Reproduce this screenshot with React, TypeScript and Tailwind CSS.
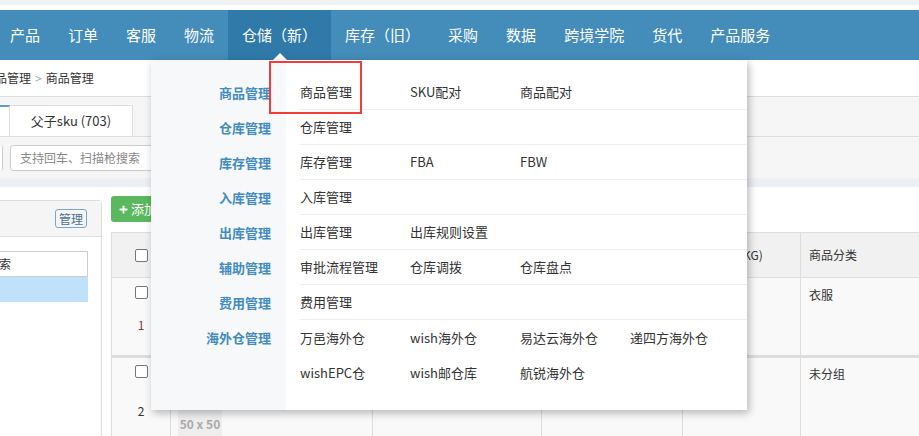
import { Plus } from "lucide-react";

const navItems = [
  "产品",
  "订单",
  "客服",
  "物流",
  "仓储（新）",
  "库存（旧）",
  "采购",
  "数据",
  "跨境学院",
  "货代",
  "产品服务",
];

const menu: { label: string; rows: string[][]; last?: boolean }[] = [
  { label: "商品管理", rows: [["商品管理", "SKU配对", "商品配对"]] },
  { label: "仓库管理", rows: [["仓库管理"]] },
  { label: "库存管理", rows: [["库存管理", "FBA", "FBW"]] },
  { label: "入库管理", rows: [["入库管理"]] },
  { label: "出库管理", rows: [["出库管理", "出库规则设置"]] },
  { label: "辅助管理", rows: [["审批流程管理", "仓库调拨", "仓库盘点"]] },
  { label: "费用管理", rows: [["费用管理"]] },
  {
    label: "海外仓管理",
    rows: [
      ["万邑海外仓", "wish海外仓", "易达云海外仓", "递四方海外仓"],
      ["wishEPC仓", "wish邮仓库", "航锐海外仓"],
    ],
    last: true,
  },
];

function Checkbox() {
  return <div className="w-[13px] h-[13px] rounded-[2px] border border-[#767676] bg-white" />;
}

function WarehouseMenu() {
  return (
    <div className="absolute left-[151px] top-[60px] z-10 w-[596px] h-[350px] pt-[15px] bg-[linear-gradient(to_right,#f7f8fa_135px,#ffffff_135px)] shadow-[2px_3px_8px_rgba(0,0,0,0.28)]">
      {menu.map((group) => (
        <div key={group.label} className="flex">
          <div className="w-[135px] h-[35px] pr-[15px] flex items-center justify-end text-[13px] font-bold text-[#428cc0]">
            {group.label}
          </div>
          <div className="flex-1 ml-[14px]">
            {group.rows.map((row, i) => (
              <div
                key={i}
                className={
                  group.last
                    ? "h-[35px] flex items-center"
                    : "h-[35px] flex items-center border-b border-[#eeeeee]"
                }
              >
                {row.map((item) => (
                  <div key={item} className="w-[110px] text-[13px] text-[#333]">
                    {item}
                  </div>
                ))}
              </div>
            ))}
          </div>
        </div>
      ))}
    </div>
  );
}

export default function App() {
  return (
    <div className="relative w-[919px] h-[436px] overflow-hidden bg-white text-[#333] font-['Noto_Sans_CJK_SC',sans-serif] leading-[16px]">
      <div className="h-[5px] bg-[#f1f2f4]" />
      <div className="h-[5px] bg-white" />

      {/* top nav */}
      <nav className="h-[50px] bg-[#448cb9] flex ml-[-4px]">
        {navItems.map((item) => (
          <div
            key={item}
            className={
              item === "仓储（新）"
                ? "relative px-[14px] flex items-center text-[15px] text-white bg-[#2f7aa8]"
                : "px-[14px] flex items-center text-[15px] text-white"
            }
          >
            {item}
            {item === "仓储（新）" && (
              <span className="absolute bottom-0 left-1/2 -translate-x-1/2 w-0 h-0 border-x-[7px] border-x-transparent border-b-[7px] border-b-white" />
            )}
          </div>
        ))}
      </nav>

      {/* breadcrumb */}
      <div className="h-[36px] flex items-center text-[12px] ml-[-17px]">
        <span>商品管理</span>
        <span className="mx-[4px] text-[#aaa]">&gt;</span>
        <span>商品管理</span>
      </div>

      {/* tabs */}
      <div className="h-[41px] border-t border-b border-[#dddddd] bg-[#f6f6f6] flex items-end">
        <div className="w-[10px] h-[31px] bg-white border-t-2 border-[#5b9bd1] border-r border-r-[#dddddd]" />
        <div className="w-[123px] h-[31px] bg-white border-t border-r border-[#dddddd] flex items-center justify-center text-[13px]">
          父子sku (703)
        </div>
      </div>

      {/* search */}
      <div className="h-[41px] bg-[#f6f6f6] flex items-center">
        <div className="w-[3px] h-[26px] border-r border-[#cccccc] bg-white rounded-r-[3px]" />
        <div className="ml-[7px] w-[260px] h-[26px] bg-white border border-[#cccccc] rounded-[3px] flex items-center pl-[9px] text-[12px] text-[#888]">
          支持回车、扫描枪搜索
        </div>
      </div>
      <div className="h-[9px] bg-[#eceff4]" />

      {/* content */}
      <div className="flex">
        <div className="mt-[13px] w-[102px] h-[300px] border-t border-r border-[#dddddd] rounded-tr-[4px]">
          <div className="h-[36px] bg-[#f5f5f5] border-b border-[#dddddd] flex items-center justify-end pr-[14px]">
            <div className="w-[32px] h-[19px] border border-[#7aa5cb] rounded-[3px] text-[12px] text-[#4d6f8e] flex items-center justify-center">
              管理
            </div>
          </div>
          <div className="pt-[14px]">
            <div className="w-[88px] h-[26px] border border-l-0 border-[#cccccc] flex items-center text-[12px] overflow-hidden">
              <span className="ml-[-13px]">搜索</span>
            </div>
            <div className="w-[88px] h-[25px] bg-[#bfe1fa]" />
          </div>
        </div>

        <div className="ml-[9px] flex-1">
          <div className="mt-[9px] h-[26px] inline-flex items-center gap-[2px] px-[7px] rounded-[3px] bg-[#5cb85c] text-white text-[13px]">
            <Plus size={11} strokeWidth={4} />
            添加商品
          </div>

          <div className="mt-[10px] border-t border-l border-[#dddddd] text-[12px]">
            <div className="flex h-[45px] bg-[#f1f1f1] border-b border-[#dddddd]">
              <div className="w-[59px] border-r border-[#dddddd] flex items-center justify-center">
                <Checkbox />
              </div>
              <div className="w-[202px] border-r border-[#dddddd]" />
              <div className="w-[169px] border-r border-[#dddddd]" />
              <div className="w-[141px] border-r border-[#dddddd]" />
              <div className="w-[118px] border-r border-[#dddddd] flex items-center pl-[8px]">
                商品重量(KG)
              </div>
              <div className="flex-1 flex items-center pl-[8px]">商品分类</div>
            </div>

            <div className="flex h-[80px] bg-[#f9f9f9] border-b-[3px] border-[#dddddd]">
              <div className="w-[59px] border-r border-[#dddddd] flex flex-col items-center pt-[8px]">
                <Checkbox />
                <div className="mt-[18px] text-[#8a3a2a]">1</div>
              </div>
              <div className="w-[202px] border-r border-[#dddddd]" />
              <div className="w-[169px] border-r border-[#dddddd]" />
              <div className="w-[141px] border-r border-[#dddddd]" />
              <div className="w-[118px] border-r border-[#dddddd]" />
              <div className="flex-1 pl-[8px] pt-[9px]">衣服</div>
            </div>

            <div className="flex h-[100px] bg-[#f9f9f9]">
              <div className="w-[59px] border-r border-[#dddddd] flex flex-col items-center pt-[7px]">
                <Checkbox />
                <div className="mt-[25px]">2</div>
              </div>
              <div className="w-[202px] border-r border-[#dddddd] pl-[7px] pt-[51px]">
                <div className="w-[44px] h-[30px] bg-[#eeeeee] flex items-center justify-center text-[12px] font-bold text-[#aaaaaa]">
                  50 x 50
                </div>
              </div>
              <div className="w-[169px] border-r border-[#dddddd]" />
              <div className="w-[141px] border-r border-[#dddddd]" />
              <div className="w-[118px] border-r border-[#dddddd]" />
              <div className="flex-1 pl-[8px] pt-[8px]">未分组</div>
            </div>
          </div>
        </div>
      </div>

      <WarehouseMenu />

      {/* highlight */}
      <div className="absolute left-[269px] top-[61px] z-20 w-[93px] h-[53px] border-2 border-[#f23b3b]" />
    </div>
  );
}
